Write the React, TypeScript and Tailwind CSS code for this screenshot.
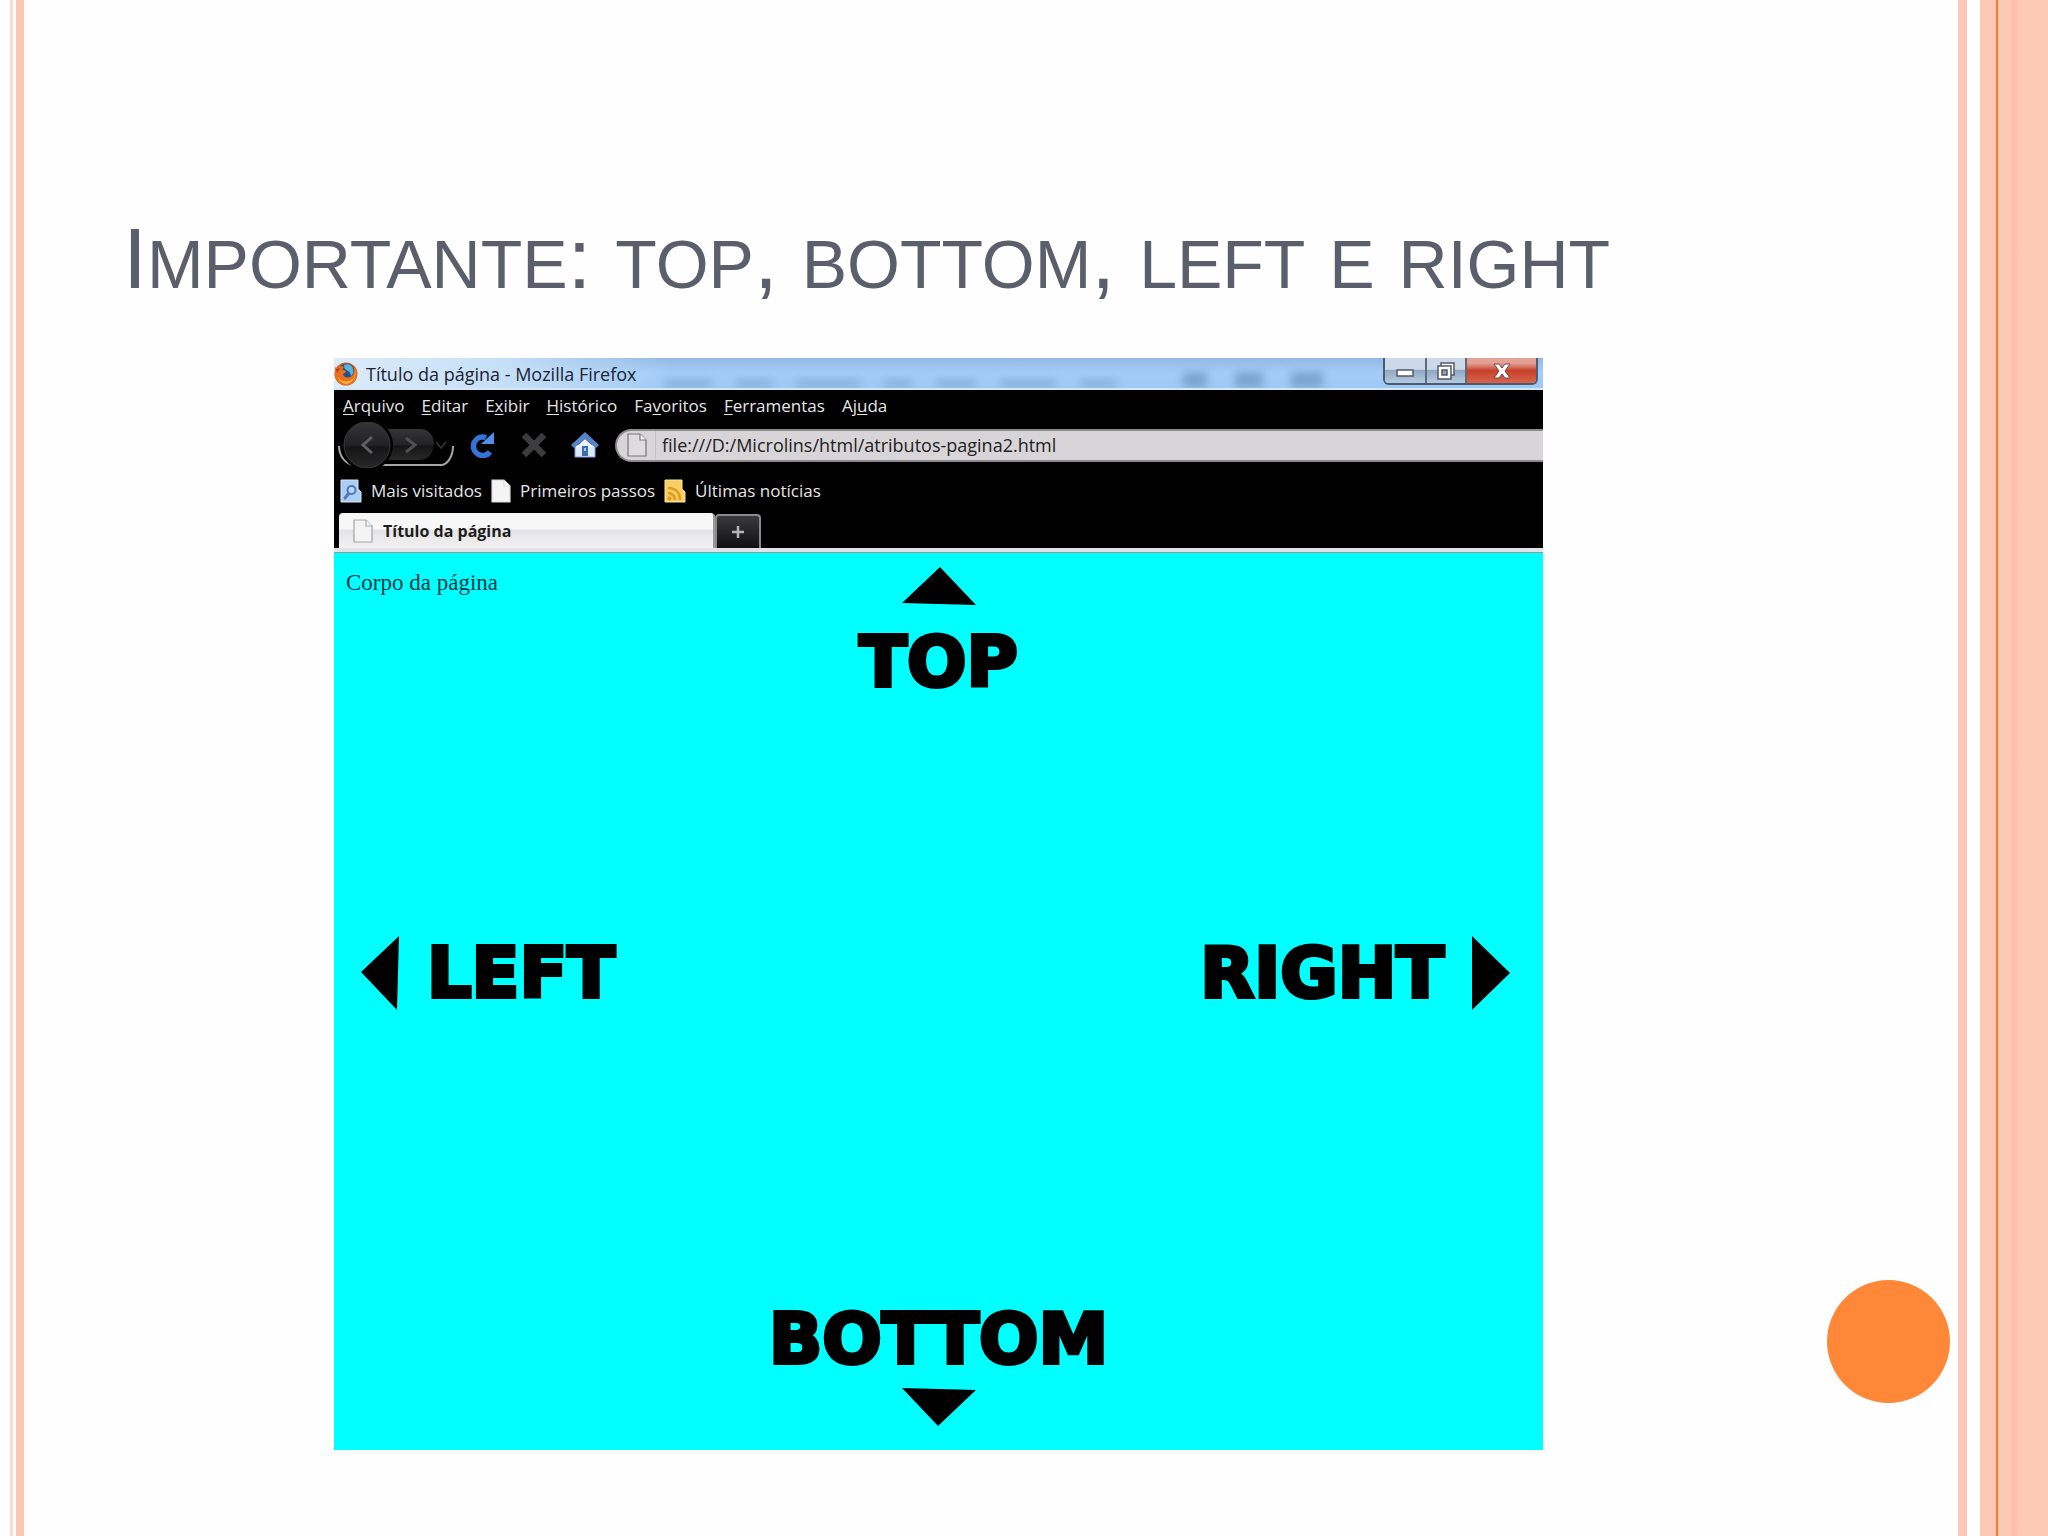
import type { ReactNode } from 'react'

interface MenuEntry {
  before: string
  key: string
  after: string
}

const menus: MenuEntry[] = [
  { before: '', key: 'A', after: 'rquivo' },
  { before: '', key: 'E', after: 'ditar' },
  { before: 'E', key: 'x', after: 'ibir' },
  { before: '', key: 'H', after: 'istórico' },
  { before: 'Fa', key: 'v', after: 'oritos' },
  { before: '', key: 'F', after: 'erramentas' },
  { before: 'Aj', key: 'u', after: 'da' },
]

function FirefoxLogo() {
  return (
    <svg viewBox="0 0 24 24" className="h-6 w-6 shrink-0" aria-hidden="true">
      <circle cx="12" cy="12" r="11.500" fill="#d9601a" />
      <circle cx="12.500" cy="9.500" r="8" fill="#24508f" />
      <path d="M10 3c4-2 8 0 9 4 1 3 0 5-2 7-1-3-1-4-3-5-3-1-4-3-4-6z" fill="#5fb3d9" />
      <path d="M1 5c1 1 2 1 3 1 2-2 4-2 6-1-1 1-2 2-1 3l3 1c0 2-2 2-3 3 0 3 4 4 7 3 3-1 5-5 4-10 3 3 4 8 2 12-2 4-6 6-10 6C5 23 1 18 1 12z" fill="#e8721b" />
      <path d="M21 8c1 6-2 10-7 11-4 1-8-1-10-4 1 5 5 7 9 7 6-1 10-8 8-14z" fill="#f9a93a" />
      <path d="M2 7c0 2 1 3 2 4 0-2 1-4 3-5-2 0-3 1-5 1z" fill="#b93a12" />
    </svg>
  )
}

function PageIcon({ stroke = '#8b8b8b', fill = '#f4f4f4' }: { stroke?: string; fill?: string }) {
  return (
    <svg viewBox="0 0 20 24" className="h-6 w-5 shrink-0" aria-hidden="true">
      <path d="M1 1h12l6 6v16H1z" fill={fill} stroke={stroke} strokeWidth="1.200" />
      <path d="M13 1v6h6" fill="#ffffff" stroke={stroke} strokeWidth="1.200" />
    </svg>
  )
}

function SearchPageIcon() {
  return (
    <svg viewBox="0 0 22 24" className="h-6 w-[22px] shrink-0" aria-hidden="true">
      <path d="M1 1h17v9l3 3v10H1z" fill="#a9cdf3" stroke="#d5e7fa" />
      <path d="M9 14l-4 5" stroke="#5078b4" strokeWidth="3" strokeLinecap="round" />
      <circle cx="11.500" cy="11" r="4" fill="#b9d7f7" stroke="#5078b4" strokeWidth="2" />
    </svg>
  )
}

function FeedIcon() {
  return (
    <svg viewBox="0 0 22 24" className="h-6 w-[22px] shrink-0" aria-hidden="true">
      <path d="M1 1h17v9l3 3v10H1z" fill="#f8cf62" stroke="#fbe4a0" />
      <path d="M4 9c8 0 12 5 12 12M4 14c4 0 7 3 7 7" fill="none" stroke="#e39a1c" strokeWidth="2.500" />
      <circle cx="5.500" cy="19.500" r="2" fill="#e39a1c" />
    </svg>
  )
}

function NavButtons() {
  return (
    <div className="relative flex h-[46px] w-[120px] shrink-0 items-center">
      <svg viewBox="0 0 120 46" className="absolute inset-0 h-full w-full" aria-hidden="true">
        <defs>
          <linearGradient id="back" x1="0" y1="0" x2="0" y2="1">
            <stop offset="0" stopColor="#353537" />
            <stop offset="0.5" stopColor="#222224" />
            <stop offset="0.55" stopColor="#151516" />
            <stop offset="1" stopColor="#29292b" />
          </linearGradient>
        </defs>
        <path d="M4 24c0 10 7 19 15 19h87c6 0 12-8 12-19" fill="none" stroke="#a5a5a7" strokeWidth="2" />
        <path d="M50 7h34c12 0 15 9 15 15s-4 16-15 16H50z" fill="url(#back)" />
        <circle cx="32" cy="23" r="26" fill="#000000" />
        <circle cx="32" cy="23" r="23" fill="url(#back)" stroke="#3b3b3d" />
      </svg>
      <button type="button" aria-label="Voltar" className="relative ml-2 flex h-11 w-12 items-center justify-center">
        <svg viewBox="0 0 16 20" className="h-5 w-4" fill="none" stroke="#5f5f61" strokeWidth="3">
          <path d="M13 2L4 10l9 8" />
        </svg>
      </button>
      <button type="button" aria-label="Avançar" className="relative flex h-8 w-10 items-center justify-center">
        <svg viewBox="0 0 16 20" className="h-5 w-4" fill="none" stroke="#505052" strokeWidth="3">
          <path d="M3 3l9 7-9 7" />
        </svg>
      </button>
      <button type="button" aria-label="Histórico recente" className="relative flex h-8 w-5 items-center justify-center">
        <svg viewBox="0 0 12 8" className="h-2 w-3" fill="none" stroke="#39393b" strokeWidth="1.500">
          <path d="M1 1l5 6 5-6" />
        </svg>
      </button>
    </div>
  )
}

function Toolbar() {
  return (
    <div className="flex h-[46px] items-center pl-px">
      <NavButtons />
      <button type="button" aria-label="Recarregar" className="ml-3">
        <svg viewBox="0 0 28 26" className="h-[26px] w-7">
          <path d="M19 5.500A9.300 9.300 0 1 0 23 20" fill="none" stroke="#3474d8" strokeWidth="5.500" />
          <path d="M27 0v12H14z" fill="#4f8fe8" />
        </svg>
      </button>
      <button type="button" aria-label="Parar" className="ml-[26px]">
        <svg viewBox="0 0 26 26" className="h-[26px] w-[26px]" stroke="#3c3c3e" strokeWidth="6.500">
          <path d="M3 3l20 20M23 3L3 23" />
        </svg>
      </button>
      <button type="button" aria-label="Página inicial" className="ml-6">
        <svg viewBox="0 0 28 26" className="h-[26px] w-7">
          <path d="M4 13h20v12H4z" fill="#dcebfb" stroke="#7aa3d8" />
          <path d="M14 0l14 13-3 3L14 7 3 16l-3-3z" fill="#5485c9" />
          <path d="M14 7l9 8H5z" fill="#eef6ff" />
          <path d="M11 14h6v10h-6z" fill="#3f6cab" />
          <path d="M13 16h2v3h-2z" fill="#a9c8ee" />
        </svg>
      </button>
      <div className="ml-4 flex h-[33px] min-w-0 flex-1 items-center rounded-l-full border-y-2 border-l-2 border-[#8c8a8d] bg-[#d8d5d8] pl-[10px]">
        <PageIcon stroke="#77757a" fill="#dedce0" />
        <input
          type="text"
          aria-label="Endereço"
          defaultValue="file:///D:/Microlins/html/atributos-pagina2.html"
          className="ml-2 h-7 min-w-0 flex-1 border-l border-[#c3c0c4] bg-transparent pl-[6px] text-lg text-[#222222] outline-none"
        />
      </div>
    </div>
  )
}

function Bookmark({ icon, label }: { icon: ReactNode; label: string }) {
  return (
    <a href="#" className="flex items-center gap-[9px]">
      {icon}
      {label}
    </a>
  )
}

function TitleBar() {
  return (
    <div className="relative flex h-8 items-start justify-between overflow-hidden border-b-2 border-[#d3e6f6] bg-linear-to-b from-[#93b9e2] via-[#a3cdf8] to-[#9fc9f5]">
      <div className="absolute inset-y-0 left-0 w-[340px] bg-linear-to-r from-[#dcebf9] via-[#c5dff7] to-transparent" />
      <div className="absolute inset-x-[330px] bottom-0 flex gap-6 blur-xs">
        <span className="h-2 w-12 bg-[#86afd9]" />
        <span className="h-2 w-9 bg-[#86afd9]" />
        <span className="h-2 w-16 bg-[#86afd9]" />
        <span className="h-2 w-7 bg-[#86afd9]" />
        <span className="h-2 w-10 bg-[#86afd9]" />
        <span className="h-2 w-14 bg-[#86afd9]" />
        <span className="h-2 w-9 bg-[#86afd9]" />
      </div>
      <div className="absolute right-[220px] bottom-0 flex gap-7 blur-xs">
        <span className="h-4 w-6 bg-[#7ba4cf]" />
        <span className="h-4 w-7 bg-[#7ba4cf]" />
        <span className="h-4 w-8 bg-[#7ba4cf]" />
      </div>
      <div className="relative flex h-8 items-center gap-2 text-lg text-[#1d2433]">
        <FirefoxLogo />
        <span>Título da página - Mozilla Firefox</span>
      </div>
      <div className="relative mr-[5px] flex h-[27px] shrink-0 overflow-hidden rounded-b-md border-x-2 border-b-2 border-[#4c5b70]">
        <button
          type="button"
          aria-label="Minimizar"
          className="flex w-[42px] items-center justify-center border-r-2 border-[#5c6b80] bg-linear-to-b from-[#cbd9e8] from-45% via-[#93a9c3] via-50% to-[#b5cbe2] pt-1"
        >
          <svg viewBox="0 0 18 8" className="h-2 w-[18px]">
            <path d="M1 1h16v6H1z" fill="#ffffff" stroke="#535a66" strokeWidth="1.500" />
          </svg>
        </button>
        <button
          type="button"
          aria-label="Restaurar"
          className="flex w-10 items-center justify-center border-r-2 border-[#5c6b80] bg-linear-to-b from-[#cbd9e8] from-45% via-[#93a9c3] via-50% to-[#b5cbe2]"
        >
          <svg viewBox="0 0 20 18" className="h-[18px] w-5" fill="#ffffff" stroke="#535a66" strokeWidth="1.500">
            <path d="M5 1h13v12H5z" />
            <path d="M2 4h13v13H2z" />
            <path d="M6 8h5v5H6z" fill="#8fa3bb" />
          </svg>
        </button>
        <button
          type="button"
          aria-label="Fechar"
          className="flex w-[69px] items-center justify-center bg-linear-to-b from-[#e3a296] from-20% via-[#c7402b] via-50% to-[#d9654c]"
        >
          <svg viewBox="0 0 18 16" className="h-4 w-[18px]">
            <path d="M1 1h5l3 4 3-4h5l-5 7 5 7h-5l-3-4-3 4H1l5-7z" fill="#ffffff" stroke="#6b4a4a" />
          </svg>
        </button>
      </div>
    </div>
  )
}

function Label({ children }: { children: ReactNode }) {
  return (
    <span className="font-['DejaVu_Sans',sans-serif] text-[70px] leading-[50px] font-bold text-black [-webkit-text-stroke:4px_black]">
      {children}
    </span>
  )
}

function PageBody() {
  return (
    <div className="flex flex-1 flex-col bg-[#00ffff] pt-[14px] pb-6">
      <div className="grid grid-cols-[1fr_auto_1fr]">
        <p className="pl-3 font-['Liberation_Serif',serif] text-[23px] leading-8 text-[#083a44]">Corpo da página</p>
        <div className="flex flex-col items-center gap-8">
          <svg viewBox="0 0 74 38" className="h-[38px] w-[74px]" aria-hidden="true">
            <path d="M38 0l36 38L0 36z" />
          </svg>
          <Label>TOP</Label>
        </div>
      </div>
      <div className="flex flex-1 items-center justify-between px-[27px] pb-14">
        <div className="flex items-center gap-7">
          <svg viewBox="0 0 38 74" className="h-[74px] w-[38px]" aria-hidden="true">
            <path d="M38 0l-2 74L0 36z" />
          </svg>
          <Label>LEFT</Label>
        </div>
        <div className="mr-[6px] flex items-center gap-7">
          <Label>RIGHT</Label>
          <svg viewBox="0 0 38 74" className="h-[74px] w-[38px]" aria-hidden="true">
            <path d="M0 0l38 37L0 74z" />
          </svg>
        </div>
      </div>
      <div className="flex flex-col items-center gap-6">
        <Label>BOTTOM</Label>
        <svg viewBox="0 0 74 38" className="h-[38px] w-[74px]" aria-hidden="true">
          <path d="M0 0l74 2-38 36z" />
        </svg>
      </div>
    </div>
  )
}

function BrowserWindow() {
  return (
    <section className="flex min-w-0 flex-1 flex-col bg-black font-['Open_Sans','Noto_Sans',sans-serif] text-[17px] text-[#e6e6e6]">
      <TitleBar />
      <nav className="flex h-8 items-center gap-[17px] pl-[9px]">
        {menus.map((menu) => (
          <button type="button" key={menu.before + menu.key + menu.after}>
            {menu.before}
            <span className="underline underline-offset-2">{menu.key}</span>
            {menu.after}
          </button>
        ))}
      </nav>
      <Toolbar />
      <div className="flex h-[45px] items-center gap-[9px] pl-[6px]">
        <Bookmark icon={<SearchPageIcon />} label="Mais visitados" />
        <Bookmark icon={<PageIcon stroke="#d8d8d8" />} label="Primeiros passos" />
        <Bookmark icon={<FeedIcon />} label="Últimas notícias" />
      </div>
      <div className="flex h-[35px] items-end pl-[5px]">
        <button
          type="button"
          className="flex h-[35px] w-[376px] items-center gap-[10px] rounded-t border-r-2 border-[#9a9a9a] bg-linear-to-b from-[#f7f7f7] from-45% via-[#e4e3e5] via-50% to-[#f2f1f2] pl-[14px] text-base font-bold text-[#1e1e1e]"
        >
          <PageIcon stroke="#a5a5a5" />
          Título da página
        </button>
        <button
          type="button"
          aria-label="Nova aba"
          className="flex h-[34px] w-[46px] items-center justify-center rounded-t-sm border-x-2 border-t-2 border-[#8a8a8c] bg-linear-to-b from-[#3a3a3c] to-[#111113]"
        >
          <svg viewBox="0 0 12 12" className="h-3 w-3" stroke="#b5b5b5" strokeWidth="2.500">
            <path d="M6 0v12M0 6h12" />
          </svg>
        </button>
      </div>
      <div className="h-[5px] border-b border-[#8e9c9c] bg-[#e4e2e4]" />
      <PageBody />
    </section>
  )
}

export default function App() {
  return (
    <div className="flex min-h-screen bg-[#fdfefd]">
      <div className="flex shrink-0 bg-white pl-[10px]">
        <div className="w-[3px] bg-[#fddccf]" />
        <div className="ml-[3px] w-2 bg-[#fbc6b2]" />
      </div>
      <main className="flex min-w-0 flex-1 flex-col">
        <h1 className="pt-[215px] pb-[51px] pl-[99px] font-['Liberation_Sans',Arial,sans-serif] text-[86px] leading-[86px] whitespace-nowrap text-[#5b5f6b]">
          I<span className="text-[68px]">MPORTANTE</span>: <span className="text-[68px]">TOP</span>,{' '}
          <span className="text-[68px]">BOTTOM</span>, <span className="text-[68px]">LEFT</span>{' '}
          <span className="text-[68px]">E</span> <span className="text-[68px]">RIGHT</span>
        </h1>
        <div className="flex flex-1 pb-[86px] pl-[310px]">
          <BrowserWindow />
          <div className="flex w-[415px] shrink-0 items-end justify-end pr-2 pb-[47px]">
            <div className="h-[123px] w-[123px] rounded-full bg-[#ff8738]" />
          </div>
        </div>
      </main>
      <div className="flex shrink-0">
        <div className="w-[9px] bg-[#fdc8b6]" />
        <div className="w-[13px] bg-white" />
        <div className="w-4 bg-[#fcc8b5]" />
        <div className="w-[2px] bg-[#f87b35]" />
        <div className="w-[14px] bg-[#fcc9b7]" />
        <div className="w-9 bg-linear-to-r from-[#fdbb9f] to-[#fdcab4] to-20%" />
      </div>
    </div>
  )
}
